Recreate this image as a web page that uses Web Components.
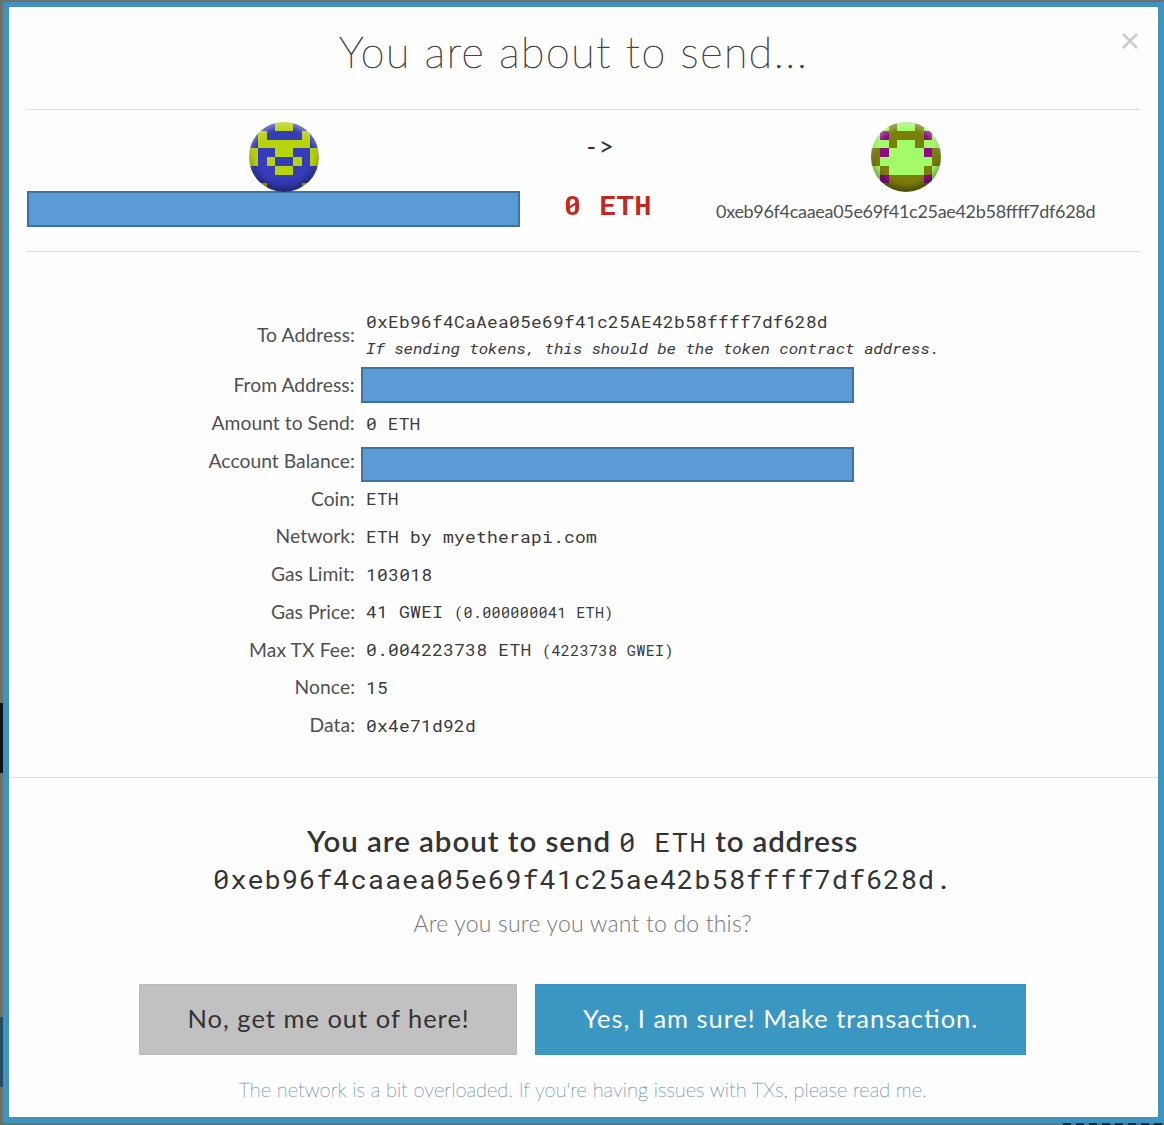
<!DOCTYPE html>
<html lang="en">
<head>
<meta charset="utf-8">
<title>Confirm transaction</title>
<style>
html,body{margin:0;height:100%;overflow:hidden}
body{font-family:Lato,"Open Sans",sans-serif;color:#333}
</style>
</head>
<body>
<send-dialog></send-dialog>
<script>
const MONO = '"Roboto Mono","Noto Sans Mono","DejaVu Sans Mono","Liberation Mono",monospace';

/* Text run spread to a given advance width through letter spacing;
   monospace runs are also drawn slightly extended. */
customElements.define('fit-text', class extends HTMLElement {
  connectedCallback() {
    const root = this.attachShadow({mode: 'open'});
    root.innerHTML = `<style>
      :host{display:inline-block;white-space:pre}
      :host([mono]){font-family:${MONO}}
      span{display:inline-block;font-feature-settings:"liga" 1;transform-origin:0 50%}
      :host([mono]) span{transform:scaleX(1.09)}
    </style><span><slot></slot></span>`;
    const span = root.querySelector('span');
    const w = +this.getAttribute('w');
    const target = this.hasAttribute('mono') ? w / 1.09 : w;
    span.style.letterSpacing = ((target - span.offsetWidth) / this.textContent.length) + 'px';
    this.style.width = w + 'px';
  }
});

customElements.define('redacted-bar', class extends HTMLElement {
  connectedCallback() {
    this.attachShadow({mode: 'open'}).innerHTML = `<style>
      :host{display:block;flex:none;box-sizing:border-box;width:493px;height:36px;background:#5b9bd5;border:2px solid #41719c}
    </style>`;
  }
});

/* 8x8 identicon; each digit of the pattern selects a colour. */
customElements.define('id-icon', class extends HTMLElement {
  connectedCallback() {
    const colors = this.getAttribute('colors').split(',');
    const cells = this.getAttribute('pattern').split(' ').map((row, y) =>
      [...row].map((c, x) => `<rect x="${x}" y="${y}" width="1" height="1" fill="${colors[c]}"/>`).join('')).join('');
    this.attachShadow({mode: 'open'}).innerHTML = `<style>
      :host{display:block;width:70px;height:70px;border-radius:50%;overflow:hidden;position:relative}
      svg{display:block}
      i{position:absolute;inset:0;border-radius:50%;box-shadow:inset 0 4px 5px rgba(255,255,255,.35),inset 0 -4px 7px rgba(0,0,0,.45)}
    </style><svg width="70" height="70" viewBox="0 0 8 8" shape-rendering="crispEdges">${cells}</svg><i></i>`;
  }
});

customElements.define('detail-row', class extends HTMLElement {
  connectedCallback() {
    this.attachShadow({mode: 'open'}).innerHTML = `<style>
      :host{display:flex;height:37.75px;align-items:center;font-size:19.3px;line-height:26px;color:#505050}
      :host([tall]){height:64px}
      .l{width:346px;display:flex;justify-content:flex-end;flex:none;padding-bottom:1px}
      .v{margin-left:11px;font-size:16.5px;color:#3a3a3a;display:flex;flex-direction:column;padding-top:.3px}
    </style><div class="l"><slot name="label"></slot></div><div class="v"><slot></slot></div>`;
  }
});

customElements.define('action-button', class extends HTMLElement {
  connectedCallback() {
    this.attachShadow({mode: 'open'}).innerHTML = `<style>
      :host{display:block}
      button{all:unset;box-sizing:border-box;display:flex;justify-content:center;align-items:center;width:100%;height:71px;padding:0 0 3px 1px;font-size:25.5px;background:#c1c1c1;color:#333;border:1px solid #b9b9b9}
      :host([primary]) button{background:#3997c2;color:#fff;border-color:#3d92bb}
    </style><button><slot></slot></button>`;
  }
});

customElements.define('send-dialog', class extends HTMLElement {
  connectedCallback() {
    this.attachShadow({mode: 'open'}).innerHTML = `<style>
      :host{display:block;box-sizing:border-box;width:1164px;height:1125px;padding:2px 0 2px 3px;
        background:
          repeating-linear-gradient(90deg,#1c2528 0 8px,#66706b 8px 13px) 1063px 1123px/101px 2px no-repeat,
          linear-gradient(#0d1114,#0d1114) 0 703px/3px 70px no-repeat,
          linear-gradient(#244b60,#244b60) 0 1017px/3px 70px no-repeat,
          #6d7169}
      *{box-sizing:border-box}
      .modal{height:1121px;background:#fefefe;border:solid #3f94bf;border-width:5px 6px 6px;display:flex;flex-direction:column}
      header{height:103px;margin:0 18px 0 17px;border-bottom:1px solid #ddd;display:flex;position:relative;justify-content:center;padding-top:16px}
      h1{margin:0;font-size:43px;font-weight:100;line-height:58px;padding-right:19px;-webkit-text-stroke:.7px #444}
      .close{position:absolute;right:2px;top:26px}
      .summary{height:142px;margin:0 18px 0 17px;border-bottom:1px solid #ddd;display:flex;padding-top:12px}
      .from{width:494px;padding-left:1px;display:flex;flex-direction:column;align-items:center}
      .from id-icon{margin-left:21px}
      .from redacted-bar{margin-top:-1px}
      .mid{width:176px;display:flex;flex-direction:column;align-items:center}
      .arrow{height:48px;line-height:48px;font-size:26px;padding-right:13px}
      .amt{color:#c3281f;font-weight:700;font-size:26px;line-height:34px;margin-top:18px}
      .to{width:419px;display:flex;flex-direction:column;align-items:center}
      .to .addr{font-size:18px;line-height:26px;margin-top:6px;color:#505050}
      .details{padding-top:51px;height:526px;border-bottom:1px solid #ddd;flex:none}
      .details redacted-bar{margin-left:-5px}
      em,small{line-height:26px}
      em{font-size:15px}small{font-size:13.8px}
      .foot{display:flex;flex-direction:column;align-items:center;padding-right:2px}
      h2{margin:44px 0 0;font-size:29.5px;font-weight:600;line-height:37px;display:flex;flex-direction:column;align-items:center;color:#333}
      h2 div{display:flex;align-items:baseline}
      h2 [mono]{font-weight:400;font-size:25px}
      .sure{margin-top:10px;font-size:23px;font-weight:300;line-height:30px;color:#777}
      .actions{display:flex;gap:18px;margin-top:46px}
      .note{margin-top:20px;font-size:20px;line-height:28px;font-weight:100;color:#5f87a5;-webkit-text-stroke:.3px #6f93ad}
    </style>
    <div class="modal">
      <header><h1><fit-text w="469">You are about to send...</fit-text></h1>
        <svg class="close" width="16" height="16" viewBox="0 0 16 16"><path d="M1 1L15 15M15 1L1 15" stroke="#ccc" stroke-width="2.6"/></svg>
      </header>
      <section class="summary">
        <div class="from"><id-icon colors="#343cb7,#b9d30b" pattern="00011000 01000010 01111110 10011001 10100101 00011000 00000000 01000010"></id-icon><redacted-bar></redacted-bar></div>
        <div class="mid"><div class="arrow"><fit-text w="30">-&gt;</fit-text></div><div class="amt"><fit-text mono w="88">0 ETH</fit-text></div></div>
        <div class="to"><id-icon colors="#a3fb68,#7c7e0b,#8e0b83" pattern="00100100 02111120 00100100 12000021 10000001 01000010 02111120 11111111"></id-icon><div class="addr"><fit-text w="379">0xeb96f4caaea05e69f41c25ae42b58ffff7df628d</fit-text></div></div>
      </section>
      <section class="details">
        <detail-row tall><fit-text slot="label" w="98">To Address:</fit-text><fit-text mono w="462">0xEb96f4CaAea05e69f41c25AE42b58ffff7df628d</fit-text><em><fit-text mono w="573">If sending tokens, this should be the token contract address.</fit-text></em></detail-row>
        <detail-row><fit-text slot="label" w="121.5">From Address:</fit-text><redacted-bar style="margin-top:-2px"></redacted-bar></detail-row>
        <detail-row><fit-text slot="label" w="143.5">Amount to Send:</fit-text><fit-text mono w="55">0 ETH</fit-text></detail-row>
        <detail-row><fit-text slot="label" w="146.5">Account Balance:</fit-text><redacted-bar style="height:35px;margin-top:6px"></redacted-bar></detail-row>
        <detail-row><fit-text slot="label" w="44">Coin:</fit-text><fit-text mono w="33">ETH</fit-text></detail-row>
        <detail-row><fit-text slot="label" w="79.5">Network:</fit-text><fit-text mono w="231">ETH by myetherapi.com</fit-text></detail-row>
        <detail-row><fit-text slot="label" w="84">Gas Limit:</fit-text><fit-text mono w="66">103018</fit-text></detail-row>
        <detail-row><fit-text slot="label" w="84">Gas Price:</fit-text><div><fit-text mono w="88">41 GWEI </fit-text><small><fit-text mono w="160">(0.000000041 ETH)</fit-text></small></div></detail-row>
        <detail-row><fit-text slot="label" w="106">Max TX Fee:</fit-text><div><fit-text mono w="176">0.004223738 ETH </fit-text><small><fit-text mono w="132">(4223738 GWEI)</fit-text></small></div></detail-row>
        <detail-row><fit-text slot="label" w="60.5">Nonce:</fit-text><fit-text mono w="22">15</fit-text></detail-row>
        <detail-row><fit-text slot="label" w="45.5">Data:</fit-text><fit-text mono w="110">0x4e71d92d</fit-text></detail-row>
      </section>
      <section class="foot">
        <h2><div><fit-text w="312">You are about to send </fit-text><fit-text mono w="88">0 ETH</fit-text><fit-text w="151"> to address</fit-text></div>
        <fit-text mono w="739">0xeb96f4caaea05e69f41c25ae42b58ffff7df628d.</fit-text></h2>
        <div class="sure"><fit-text w="338">Are you sure you want to do this?</fit-text></div>
        <div class="actions"><action-button style="width:378px"><fit-text w="282">No, get me out of here!</fit-text></action-button><action-button primary style="width:491px"><fit-text w="396">Yes, I am sure! Make transaction.</fit-text></action-button></div>
        <div class="note"><fit-text w="688">The network is a bit overloaded. If you're having issues with TXs, please read me.</fit-text></div>
      </section>
    </div>`;
  }
});
</script>
</body>
</html>
